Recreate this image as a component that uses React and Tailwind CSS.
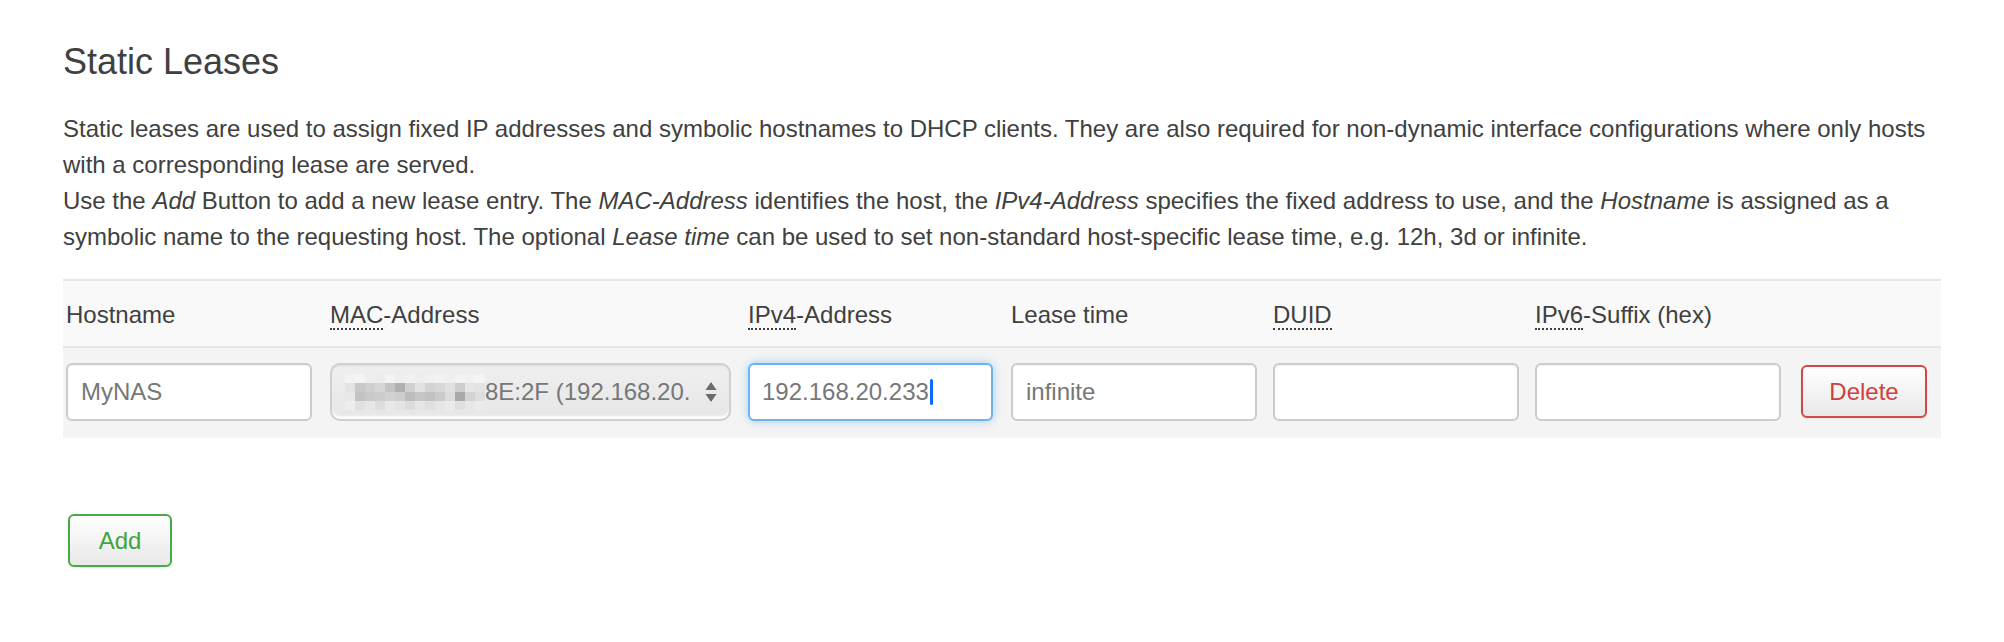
import { useState } from "react";

const FONT = "font-['Liberation_Sans','Helvetica_Neue',Arial,sans-serif]";

// pixelated (redacted) part of the MAC address in the select
const MOSAIC = [
  ["#f2f2f2", "#f4f4f4", "#eeeeee", "#ececec", "#f3f3f3", "#eeeeee", "#f1f1f1", "#ededed", "#f0f0f0", "#f2f2f2", "#efefef", "#f3f3f3", "#f1f1f1", "#f4f4f4"],
  ["#e4e4e4", "#c8c8c8", "#cfcfcf", "#d6d6d6", "#c4c4c4", "#b0b0b0", "#d0d0d0", "#e2e2e2", "#d3d3d3", "#d8d8d8", "#e0e0e0", "#cdcdcd", "#e6e6e6", "#e3e3e3"],
  ["#e8e8e8", "#c3c3c3", "#c9c9c9", "#cccccc", "#d2d2d2", "#cdcdcd", "#bdbdbd", "#c6c6c6", "#c2c2c2", "#cbcbcb", "#dcdcdc", "#a9a9a9", "#d3d3d3", "#dedede"],
  ["#ededed", "#e0e0e0", "#e6e6e6", "#dddddd", "#e8e8e8", "#e3e3e3", "#dcdcdc", "#e5e5e5", "#e0e0e0", "#e6e6e6", "#ebebeb", "#dfdfdf", "#e7e7e7", "#ebebeb"],
];

function Mosaic() {
  return (
    <svg width="142" height="36" viewBox="0 0 142 36" className="shrink-0">
      {MOSAIC.map((row, r) =>
        row.map((c, i) => (
          <rect key={`${r}-${i}`} x={i * 10 + 2} y={r * 9} width="10" height="9" fill={c} />
        ))
      )}
    </svg>
  );
}

function Abbr({ children }) {
  return <span className="border-b-2 border-dotted border-[#404040]">{children}</span>;
}

function TextInput({ value, focused }) {
  return (
    <div
      className={
        focused
          ? "flex h-[58px] w-[245px] items-center rounded-[6px] border-2 border-[#6cb2ee] bg-white pl-[12px] text-[#777777] shadow-[0_0_10px_rgba(102,175,233,0.55)]"
          : "flex h-[58px] w-[246px] items-center rounded-[6px] border-2 border-[#cccccc] bg-white pl-[13px] text-[#777777] shadow-[inset_0_1px_2px_rgba(0,0,0,0.06)]"
      }
    >
      <span>{value}</span>
      {focused && <span className="ml-[1px] h-[26px] w-[3px] rounded-sm bg-[#0a6cff]" />}
    </div>
  );
}

export default function App() {
  const [rows] = useState([
    { host: "MyNAS", mac: "8E:2F (192.168.20.", ip: "192.168.20.233", lease: "infinite" },
  ]);

  return (
    <div className={`${FONT} min-h-[642px] bg-white px-[63px] text-[24px] text-[#404040]`}>
      <h3 className="pt-[35px] text-[36px] leading-[54px] text-[#404040]">Static Leases</h3>

      {/* Description */}
      <div className="mt-[22px] leading-[36px]">
        <div className="whitespace-nowrap">
          Static leases are used to assign fixed IP addresses and symbolic hostnames to DHCP clients. They are also required for non-dynamic interface configurations where only hosts
        </div>
        <div className="whitespace-nowrap">with a corresponding lease are served.</div>
        <div className="whitespace-nowrap">
          Use the <em>Add</em> Button to add a new lease entry. The <em>MAC-Address</em> identifies the host, the{" "}
          <em>IPv4-Address</em> specifies the fixed address to use, and the <em>Hostname</em> is assigned as a
        </div>
        <div className="whitespace-nowrap">
          symbolic name to the requesting host. The optional <em>Lease time</em> can be used to set non-standard host-specific lease time, e.g. 12h, 3d or infinite.
        </div>
      </div>

      {/* Table */}
      <div className="mt-[24px] w-[1878px]">
        <div className="grid h-[67px] grid-cols-[264px_418px_263px_262px_262px_266px_1fr] border-t-2 border-[#e6e6e6] bg-[#f9f9f9] pl-[3px] pt-[16px] leading-[36px]">
          <div>Hostname</div>
          <div>
            <Abbr>MAC</Abbr>-Address
          </div>
          <div>
            <Abbr>IPv4</Abbr>-Address
          </div>
          <div>Lease time</div>
          <div>
            <Abbr>DUID</Abbr>
          </div>
          <div>
            <Abbr>IPv6</Abbr>-Suffix (hex)
          </div>
          <div />
        </div>

        {rows.map((row) => (
          <div
            key={row.host}
            className="grid h-[92px] grid-cols-[264px_418px_263px_262px_262px_266px_1fr] items-center border-t-2 border-[#e6e6e6] bg-[#f4f4f4] pb-[3px] pl-[3px]"
          >
            <TextInput value={row.host} />

            {/* Select */}
            <div className="flex h-[58px] w-[401px] items-center rounded-[10px] border-2 border-[#cfcfcf] bg-linear-to-b from-[#efefef] to-[#e6e6e6] pl-[11px] text-[#777777] shadow-[inset_0_-3px_2px_rgba(255,255,255,0.9),inset_0_1px_2px_rgba(0,0,0,0.08)]">
              <Mosaic />
              <span className="whitespace-nowrap">{row.mac}</span>
              <svg width="12" height="20" viewBox="0 0 12 20" className="ml-auto mr-[12px] shrink-0">
                <path d="M6 0 L11.5 8 L0.5 8 Z" fill="#6b6b6b" />
                <path d="M0.5 12 L11.5 12 L6 20 Z" fill="#6b6b6b" />
              </svg>
            </div>

            <TextInput value={row.ip} focused />
            <TextInput value={row.lease} />
            <TextInput value="" />
            <TextInput value="" />

            <div>
              <button className="h-[53px] w-[126px] rounded-[6px] border-2 border-[#d24747] bg-linear-to-b from-white to-[#e8e8e8] text-[24px] text-[#d03f3f] shadow-[0_1px_2px_rgba(0,0,0,0.08)]">
                Delete
              </button>
            </div>
          </div>
        ))}
      </div>

      {/* Add */}
      <div className="mt-[76px] pl-[5px]">
        <button className="h-[53px] w-[104px] rounded-[6px] border-2 border-[#46aa46] bg-linear-to-b from-white to-[#e8e8e8] text-[24px] text-[#3ea53e] shadow-[0_1px_2px_rgba(0,0,0,0.08)]">
          Add
        </button>
      </div>
    </div>
  );
}
